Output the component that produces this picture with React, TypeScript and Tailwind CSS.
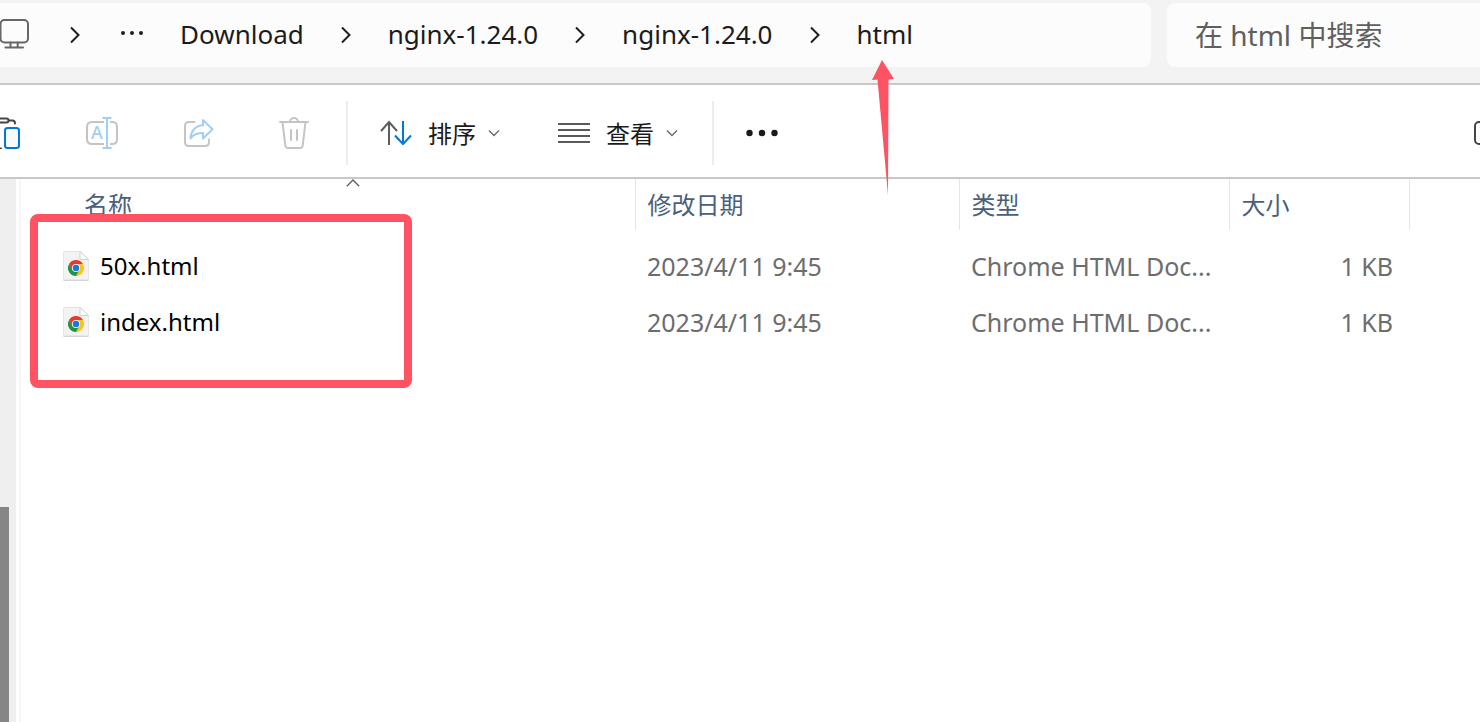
import * as React from "react";

type FileRow = {
  name: string;
  modified: string;
  type: string;
  size: string;
};

const crumbs = ["Download", "nginx-1.24.0", "nginx-1.24.0", "html"];

const files: FileRow[] = [
  { name: "50x.html", modified: "2023/4/11 9:45", type: "Chrome HTML Doc...", size: "1 KB" },
  { name: "index.html", modified: "2023/4/11 9:45", type: "Chrome HTML Doc...", size: "1 KB" },
];

function MonitorIcon() {
  return (
    <svg width="32" height="32" viewBox="0 0 32 32" fill="none" stroke="#666" strokeWidth="2" strokeLinecap="round">
      <rect x="2.5" y="1" width="27.5" height="22.5" rx="4" />
      <path d="M12.5 23.5v5M19.7 23.5v5M7.5 28.5h17.5" />
    </svg>
  );
}

function CrumbChevron() {
  return (
    <svg width="10" height="18" viewBox="0 0 10 18" fill="none" stroke="#1f1f1f" strokeWidth="2">
      <path d="M1 1.5l7.500 7.500L1 16.500" />
    </svg>
  );
}

function ChevronDown() {
  return (
    <svg width="12" height="8" viewBox="0 0 12 8" fill="none" stroke="#6b6b6b" strokeWidth="1.4">
      <path d="M1 1.5l5 5 5-5" />
    </svg>
  );
}

function PasteIcon() {
  return (
    <svg width="32" height="32" viewBox="0 0 32 32" fill="none" strokeWidth="2" strokeLinecap="round">
      <g stroke="#454545">
        <rect x="8" y="1.5" width="10.5" height="4" rx="2" />
        <path d="M19 3.5h3.5q2.500 0 2.500 3M8 3.5H4q-3 0-3 3v22q0 3 3 3h7" />
      </g>
      <rect x="15" y="11" width="14" height="20" rx="2.5" fill="#fafafa" stroke="#0078d7" />
    </svg>
  );
}

function RenameIcon() {
  return (
    <svg width="32" height="32" viewBox="0 0 32 32" fill="none" strokeWidth="2">
      <path d="M18 5H6Q1 5 1 10v12q0 5 5 5h12M24 5h2.5Q31 5 31 10v12q0 5-4.5 5H24" stroke="#c4c4c4" />
      <path d="M16.5 1h9M16.5 31h9M21 1v30" stroke="#a2cef3" />
      <text x="5" y="21.5" fontSize="18" fontWeight="500" fill="#a2cef3" className="font-['Noto_Sans']">A</text>
    </svg>
  );
}

function ShareIcon() {
  return (
    <svg width="32" height="32" viewBox="0 0 32 32" fill="none" strokeWidth="2" strokeLinejoin="round" strokeLinecap="round">
      <path d="M12.5 5H7Q3 5 3 9v16q0 4 4 4h16q4 0 4-4v-2.5" stroke="#c4c4c4" />
      <path d="M21 3l9.5 9.2L21 21.500v-5.500c-5 0-9.500 1-12.500 5.500C9 14 13.500 8.500 21 8.300z" stroke="#a2cef3" />
    </svg>
  );
}

function TrashIcon() {
  return (
    <svg width="32" height="32" viewBox="0 0 32 32" fill="none" stroke="#c4c4c4" strokeWidth="2" strokeLinecap="round">
      <path d="M2 5h28M12 5a4 4 0 0 1 8 0M4.500 5l2.800 23.500q.3 2.500 2.700 2.500h12q2.400 0 2.700-2.500L27.500 5M13 13v10M19 13v10" />
    </svg>
  );
}

function SortIcon() {
  return (
    <svg width="32" height="32" viewBox="0 0 32 32" fill="none" strokeWidth="2">
      <path d="M9 28V5M1 14l8-9 8 9" stroke="#5c5c5c" />
      <path d="M23 4v23M15 18.5l8 8.5 8-8.5" stroke="#0078d7" />
    </svg>
  );
}

function ViewIcon() {
  return (
    <svg width="32" height="32" viewBox="0 0 32 32" stroke="#5a5a5a" strokeWidth="2">
      <path d="M0 7h32M0 13h32M0 19h32M0 25h32" />
    </svg>
  );
}

function MoreIcon() {
  return (
    <svg width="32" height="32" viewBox="0 0 32 32" fill="#1a1a1a">
      <circle cx="3.5" cy="16" r="3.2" />
      <circle cx="16" cy="16" r="3.2" />
      <circle cx="28.5" cy="16" r="3.2" />
    </svg>
  );
}

function ChromeFileIcon() {
  return (
    <svg width="26" height="30" viewBox="0 0 26 30" className="shrink-0">
      <path d="M1 .5h16l8.5 8V29H.5V1z" fill="#f3f3f3" stroke="#e6e6e6" />
      <path d="M.5 29.300h25" stroke="#cfcfcf" />
      <path d="M17 .5v8h8.5z" fill="#fff" stroke="#c6c6c6" strokeWidth=".8" />
      <path d="M13 13h6.930A8 8 0 0 1 13 25l3.460-6z" fill="#fcc31e" />
      <path d="M6.070 13l3.470 6 6.920 0L13 25A8 8 0 0 1 6.070 13z" fill="#229342" />
      <path d="M6.070 13A8 8 0 0 1 19.930 13H13l-3.460 6z" fill="#e33b2e" />
      <circle cx="13" cy="17" r="4" fill="#fff" />
      <circle cx="13" cy="17" r="3.2" fill="#1a73e8" />
    </svg>
  );
}

function AddressBar() {
  return (
    <header className="flex h-[85px] gap-4 overflow-hidden border-b-2 border-[#c8c8c8] bg-[#f3f3f3] pt-[3px]">
      <nav aria-label="Path" className="flex h-16 flex-1 items-center overflow-hidden rounded-r-lg bg-[#fcfcfc]">
        <span className="-ml-[2px]"><MonitorIcon /></span>
        <span className="ml-10"><CrumbChevron /></span>
        <button type="button" aria-label="More folders" className="ml-10">
          <svg width="24" height="8" viewBox="0 0 24 8" fill="#1f1f1f">
            <circle cx="3" cy="2" r="2" />
            <circle cx="12" cy="2" r="2" />
            <circle cx="21" cy="2" r="2" />
          </svg>
        </button>
        <ol className="ml-9 flex items-center text-[26px] leading-8 text-[#1b1b1b]">
          {crumbs.map((crumb, i) => (
            <li key={i} className="flex items-center">
              {i > 0 && (
                <span className="flex w-[84px] justify-center"><CrumbChevron /></span>
              )}
              <a href="#" className="pb-0.5">{crumb}</a>
            </li>
          ))}
        </ol>
      </nav>
      <input
        type="search"
        aria-label="在 html 中搜索"
        placeholder="在 html 中搜索"
        className="h-16 w-[313px] rounded-l-lg bg-[#fcfcfc] pl-7 text-[28px] text-[#5f5f5f] outline-none placeholder:text-[#5f5f5f]"
      />
    </header>
  );
}

function Toolbar() {
  return (
    <div className="flex h-[94px] items-center overflow-hidden border-b-2 border-[#c8c8c8] bg-white pt-1 text-2xl text-[#1b1b1b]">
      <div className="-ml-[10px] flex shrink-0 gap-16">
        <button type="button" aria-label="Paste"><PasteIcon /></button>
        <button type="button" aria-label="Rename" disabled><RenameIcon /></button>
        <button type="button" aria-label="Share" disabled><ShareIcon /></button>
        <button type="button" aria-label="Delete" disabled><TrashIcon /></button>
      </div>
      <div className="mr-8 ml-9 h-16 w-[2px] bg-[#ededed]" />
      <div className="flex gap-[58px]">
        <button type="button" className="flex items-center">
          <SortIcon />
          <span className="mr-3 ml-4 pt-0.5">排序</span>
          <ChevronDown />
        </button>
        <button type="button" className="flex items-center">
          <ViewIcon />
          <span className="mr-3 ml-4 pt-0.5">查看</span>
          <ChevronDown />
        </button>
      </div>
      <div className="mr-8 ml-[34px] h-16 w-[2px] bg-[#ededed]" />
      <button type="button" aria-label="More"><MoreIcon /></button>
      <button type="button" aria-label="Details" className="-mr-[26px] ml-auto shrink-0">
        <svg width="32" height="32" viewBox="0 0 32 32" fill="none" stroke="#454545" strokeWidth="2">
          <rect x="1" y="5" width="30" height="22" rx="4" />
        </svg>
      </button>
    </div>
  );
}

function FileTable() {
  return (
    <table className="w-full table-fixed text-left">
      <colgroup>
        <col className="w-[614px]" />
        <col className="w-[324px]" />
        <col className="w-[270px]" />
        <col className="w-[180px]" />
        <col />
      </colgroup>
      <thead>
        <tr className="h-[51px] text-2xl text-[#4a5f7e]">
          <th className="relative border-r border-[#e5e5e5] pl-[63px] font-normal">
            名称
            <svg className="absolute top-0 left-[325px]" width="14" height="8" viewBox="0 0 14 8" fill="none" stroke="#5a5a5a" strokeWidth="1.3">
              <path d="M.8 7.2L7 1l6.2 6.2" />
            </svg>
          </th>
          <th className="border-r border-[#e5e5e5] pl-3 font-normal">修改日期</th>
          <th className="border-r border-[#e5e5e5] pl-3 font-normal">类型</th>
          <th className="border-r border-[#e5e5e5] pl-3 font-normal">大小</th>
          <td />
        </tr>
      </thead>
      <tbody className="text-[25px] leading-8 text-[#6d6d6d]">
        <tr className="h-2" />
        {files.map((file) => (
          <tr key={file.name} className="h-14">
            <td className="pl-[42px] text-2xl text-black">
              <div className="flex items-center gap-[11px]">
                <ChromeFileIcon />
                {file.name}
              </div>
            </td>
            <td className="pl-3">{file.modified}</td>
            <td className="pl-3 whitespace-nowrap">{file.type}</td>
            <td className="pr-4 text-right">{file.size}</td>
            <td />
          </tr>
        ))}
      </tbody>
    </table>
  );
}

export default function App() {
  return (
    <div className="relative flex min-h-screen flex-col overflow-hidden bg-white font-['Noto_Sans','Noto_Sans_CJK_SC',sans-serif]">
      <AddressBar />
      <Toolbar />
      <main className="flex flex-1">
        <div className="flex w-4 shrink-0 flex-col bg-[#efefef] pt-[328px]">
          <div className="w-[9px] flex-1 bg-[#868686]" />
        </div>
        <div className="ml-[3px] min-w-0 flex-1 border-l-2 border-[#f6f6f6]">
          <FileTable />
        </div>
      </main>

      <div className="pointer-events-none absolute top-[214px] left-[30px] h-[174px] w-[382px] rounded-lg border-8 border-[#ff5263]" />
      <svg className="pointer-events-none absolute top-[60px] left-[871px]" width="24" height="136" viewBox="0 0 24 136">
        <path d="M11 0l12 19-5.5.5L17 135 6.500 19.500 1 20z" fill="#ff5263" />
      </svg>
    </div>
  );
}
